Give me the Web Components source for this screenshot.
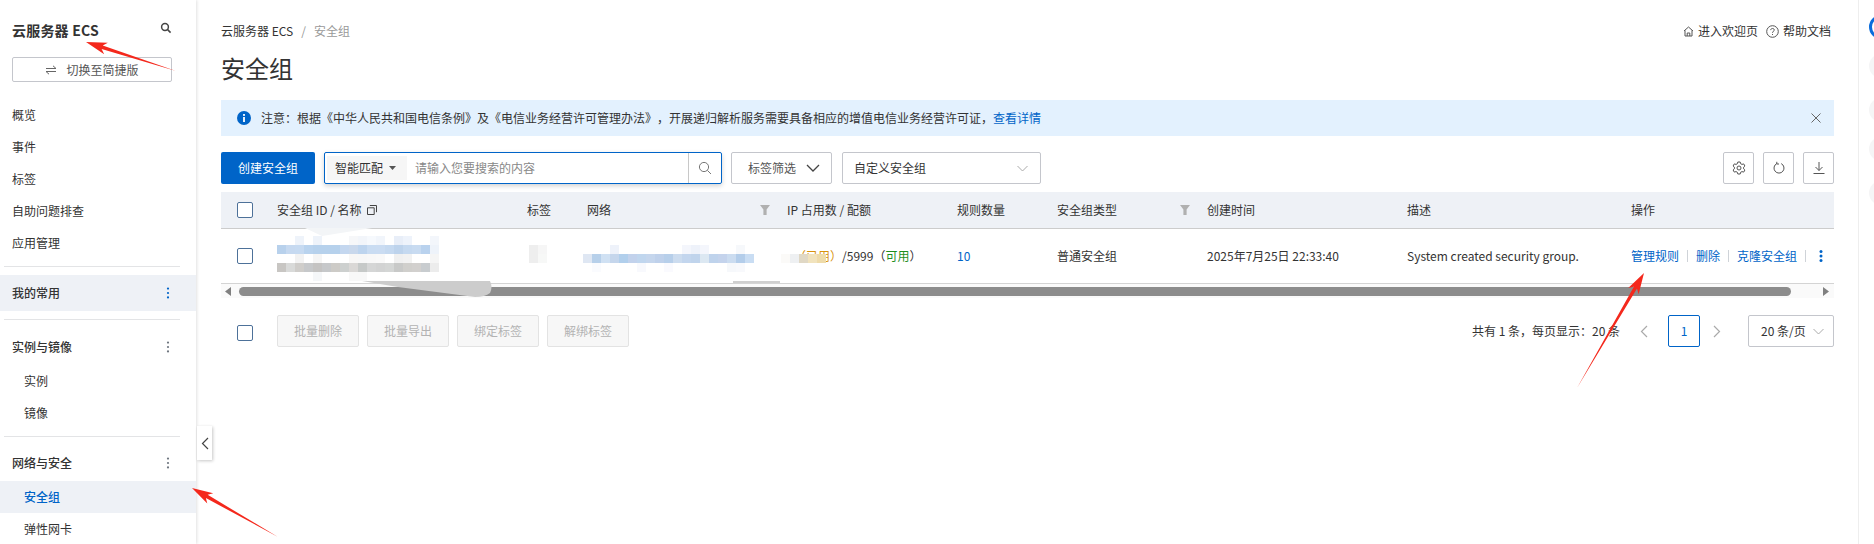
<!DOCTYPE html>
<html lang="zh-CN">
<head>
<meta charset="utf-8">
<title>安全组 - 云服务器 ECS</title>
<style>
  html, body { margin: 0; height: 544px; overflow: hidden; background: #fff; }
  body {
    position: relative;
    font: 12px/20px "Noto Sans CJK SC", "Noto Sans", sans-serif;
    text-spacing-trim: space-all;
    color: #333;
    display: grid;
    grid-template-columns: 196px 1fr 16px;
  }
</style>
</head>
<body>
  <side-bar>
    <nav-title big icon="search">云服务器 ECS</nav-title>
    <switch-button>切换至简捷版</switch-button>
    <nav-item style="margin-top:17px">概览</nav-item>
    <nav-item>事件</nav-item>
    <nav-item>标签</nav-item>
    <nav-item>自助问题排查</nav-item>
    <nav-item>应用管理</nav-item>
    <nav-rule style="margin:7px 16px 8px 4px"></nav-rule>
    <nav-title shaded icon="kebab-blue">我的常用</nav-title>
    <nav-rule style="margin:8px 16px 9px 4px"></nav-rule>
    <nav-title icon="kebab">实例与镜像</nav-title>
    <nav-item sub>实例</nav-item>
    <nav-item sub>镜像</nav-item>
    <nav-rule style="margin:7px 16px 8px 4px"></nav-rule>
    <nav-title icon="kebab">网络与安全</nav-title>
    <nav-item sub active>安全组</nav-item>
    <nav-item sub>弹性网卡</nav-item>
  </side-bar>

  <main-area>
    <page-head></page-head>
    <notice-bar></notice-bar>
    <tool-bar></tool-bar>
    <data-table></data-table>
    <pager-bar></pager-bar>
  </main-area>

  <right-strip></right-strip>
  <collapse-tab></collapse-tab>
  <mark-up></mark-up>

<script>
  const ICONS = {
    search: '<svg width="12" height="12" viewBox="0 0 12 12" fill="none" stroke="currentColor" stroke-width="1.5"><circle cx="5" cy="5" r="3.4"/><path d="M7.6 7.6 10.6 10.6"/></svg>',
    searchThin: '<svg width="14" height="14" viewBox="0 0 14 14" fill="none" stroke="currentColor"><circle cx="6" cy="6" r="4.6"/><path d="M9.4 9.4 13 13"/></svg>',
    kebab: '<svg width="4" height="12" viewBox="0 0 4 12" fill="currentColor"><circle cx="2" cy="1.6" r="1.1"/><circle cx="2" cy="6" r="1.1"/><circle cx="2" cy="10.4" r="1.1"/></svg>',
    kebabBig: '<svg width="4" height="12" viewBox="0 0 4 12" fill="currentColor"><circle cx="2" cy="1.6" r="1.5"/><circle cx="2" cy="6" r="1.5"/><circle cx="2" cy="10.4" r="1.5"/></svg>',
    swap: '<svg width="12" height="10" viewBox="0 0 12 10" fill="none" stroke="currentColor"><path d="M1 3.5H11L8 .8M11 6.5H1L4 9.2"/></svg>',
    down: '<svg width="14" height="8" viewBox="0 0 14 8" fill="none" stroke="currentColor" stroke-width="1.3"><path d="M1 1 7 7 13 1"/></svg>',
    downSmall: '<svg width="11" height="7" viewBox="0 0 11 7" fill="none" stroke="currentColor"><path d="M.5 1 5.5 6 10.5 1"/></svg>',
    left: '<svg width="8" height="13" viewBox="0 0 8 13" fill="none" stroke="currentColor" stroke-width="1.2"><path d="M7 1 1.5 6.5 7 12"/></svg>',
    right: '<svg width="8" height="13" viewBox="0 0 8 13" fill="none" stroke="currentColor" stroke-width="1.2"><path d="M1 1 6.5 6.5 1 12"/></svg>',
    home: '<svg width="11" height="11" viewBox="0 0 11 11" fill="none" stroke="currentColor"><path d="M1 5 5.5 1 10 5M2 4.4V10H9V4.4M4.2 10V7H6.8V10"/></svg>',
    help: '<svg width="13" height="13" viewBox="0 0 13 13" fill="none" stroke="currentColor"><circle cx="6.5" cy="6.5" r="5.8"/><path d="M4.7 5.1C4.7 2.9 8.3 3 8.3 5 8.3 6.2 6.5 6.3 6.5 7.8M6.5 9V10"/></svg>',
    info: '<svg width="14" height="14" viewBox="0 0 14 14"><circle cx="7" cy="7" r="7" fill="#0064c8"/><rect x="6.1" y="6" width="1.8" height="5" fill="#fff"/><rect x="6.1" y="3" width="1.8" height="1.9" fill="#fff"/></svg>',
    close: '<svg width="10" height="10" viewBox="0 0 10 10" fill="none" stroke="currentColor"><path d="M.5.5 9.5 9.5M9.5.5.5 9.5"/></svg>',
    gear: '<svg width="14" height="14" viewBox="0 0 14 14" fill="none" stroke="currentColor"><path d="M5.8 1H8.2L8.6 2.7 10 3.4 11.7 2.9 12.9 5 11.6 6.2V7.8L12.9 9 11.7 11.1 10 10.6 8.6 11.3 8.2 13H5.8L5.4 11.3 4 10.6 2.3 11.1 1.1 9 2.4 7.8V6.2L1.1 5 2.3 2.9 4 3.4 5.4 2.7Z"/><circle cx="7" cy="7" r="2"/></svg>',
    refresh: '<svg width="14" height="14" viewBox="0 0 14 14" fill="none" stroke="currentColor"><path d="M9.2 2.6A5 5 0 1 1 4.8 2.6"/><path d="M4.8 .8V3H7"/></svg>',
    download: '<svg width="14" height="14" viewBox="0 0 14 14" fill="none" stroke="currentColor"><path d="M7 1V9.5M3.5 6 7 9.5 10.5 6M1.5 12.5H12.5"/></svg>',
    funnel: '<svg width="10" height="10" viewBox="0 0 10 10" fill="#b0b0b0"><path d="M0 0H10L6.6 4.4V10H3.4V4.4Z"/></svg>',
    copy: '<svg width="10" height="10" viewBox="0 0 10 10" fill="none" stroke="#444"><path d="M.5 2.8H7.2V9.5H.5ZM2.8 .5H9.5V7.2"/></svg>',
    caret: '<svg width="7" height="4" viewBox="0 0 7 4" fill="#555"><path d="M0 0H7L3.5 4Z"/></svg>'
  };

  // small helper, every element below is only css + markup in an open shadow root
  function component(name, css, html, setup) {
    const template = document.createElement("template");
    template.innerHTML = `<style>${css}</style>${html}`;
    customElements.define(name, class extends HTMLElement {
      constructor() {
        super();
        this.attachShadow({ mode: "open" });
        this.shadowRoot.appendChild(template.content.cloneNode(true));
      }
      connectedCallback() {
        if (setup) setup(this, this.shadowRoot);
      }
    });
  }

  component("side-bar", `
    :host { display: block; height: 544px; overflow: hidden; background: #fff; box-shadow: 1px 0 3px rgba(0,0,0,.12); position: relative; }
  `, `<slot></slot>`);

  component("nav-title", `
    :host { display: flex; align-items: center; justify-content: space-between; height: 36px; padding: 0 26px 0 12px; font-weight: 500; color: #333; }
    :host([big]) { height: 54px; padding-top: 3px; font-size: 14px; padding-right: 24px; font-weight: 700; letter-spacing: .2px; }
    :host([shaded]) { background: #eef1f6; }
    i { display: flex; color: #6f7680; font-style: normal; }
    :host([big]) i { color: #444; margin-top: -4px; }
    :host([shaded]) i { color: #0064c8; }
  `, `<span><slot></slot></span><i id="ic"></i>`, (el, root) => {
    const n = el.getAttribute("icon");
    root.getElementById("ic").innerHTML = n === "search" ? ICONS.search : ICONS.kebab;
  });

  component("switch-button", `
    :host { display: flex; align-items: center; justify-content: center; gap: 9px; box-sizing: border-box; width: 160px; height: 25px; margin-left: 12px; border: 1px solid #c4c6cc; border-radius: 2px; color: #555; background: #fff; }
    i { display: flex; color: #666; }
  `, `<i>${ICONS.swap}</i><span><slot></slot></span>`);

  component("nav-item", `
    :host { display: flex; align-items: center; height: 32px; padding-left: 12px; color: #333; }
    :host([sub]) { padding-left: 24px; }
    :host([active]) { background: #eef1f6; color: #0064c8; font-weight: 500; }
  `, `<slot></slot>`);

  component("nav-rule", `:host { display: block; height: 1px; background: #e3e4e6; }`, ``);

  component("main-area", `
    :host { display: block; padding: 21px 24px 0 25px; min-width: 0; }
  `, `<slot></slot>`);

  component("page-head", `
    :host { display: block; }
    .top { display: flex; justify-content: space-between; height: 20px; padding-right: 3px; }
    .crumb b { font-weight: 400; color: #999; }
    .crumb u { text-decoration: none; color: #999; margin: 0 8px; }
    .links { display: flex; align-items: center; }
    .links span { display: flex; align-items: center; gap: 4px; margin-left: 8px; }
    .links svg { color: #555; }
    h1 { margin: 9px 0 0; font-size: 24px; line-height: 36px; font-weight: 400; color: #333; }
  `, `
    <div class="top">
      <div class="crumb">云服务器 ECS<u>/</u><b>安全组</b></div>
      <div class="links"><span>${ICONS.home}进入欢迎页</span><span>${ICONS.help}帮助文档</span></div>
    </div>
    <h1>安全组</h1>
  `);

  component("notice-bar", `
    :host { display: flex; align-items: center; height: 36px; margin-top: 14px; padding: 0 13px 0 16px; background: #e3f1fe; }
    span { flex: 1; margin-left: 10px; }
    a { color: #0064c8; }
    i { display: flex; color: #666; }
  `, `${ICONS.info}<span>注意：根据《中华人民共和国电信条例》及《电信业务经营许可管理办法》，开展递归解析服务需要具备相应的增值电信业务经营许可证，<a>查看详情</a></span><i>${ICONS.close}</i>`);

  component("tool-bar", `
    :host { display: flex; height: 32px; margin-top: 16px; }
    .create { width: 94px; background: #0064c8; color: #fff; border-radius: 2px; display: flex; align-items: center; justify-content: center; }
    .search { box-sizing: border-box; width: 398px; margin-left: 9px; display: flex; align-items: center; border: 1px solid #0064c8; border-radius: 2px; box-shadow: 0 2px 5px rgba(0,0,0,.18); }
    .match { margin-left: 2px; width: 80px; height: 24px; background: #f6f6f6; display: flex; align-items: center; padding-left: 8px; box-sizing: border-box; gap: 6px; }
    .hint { flex: 1; padding-left: 8px; color: #888; }
    .go { width: 32px; height: 30px; border-left: 1px solid #c8c8c8; display: flex; align-items: center; justify-content: center; color: #777; }
    .box { box-sizing: border-box; display: flex; align-items: center; justify-content: space-between; height: 32px; border: 1px solid #c4c6cc; border-radius: 2px; margin-left: 9px; }
    .tag { width: 101px; padding: 0 11px 0 16px; color: #555; }
    .tag svg { color: #444; }
    .kind { width: 199px; margin-left: 10px; padding: 0 12px 0 11px; }
    .kind svg { color: #aaa; }
    .end { flex: 1; display: flex; justify-content: flex-end; gap: 9px; }
    .tool { box-sizing: border-box; width: 31px; height: 32px; border: 1px solid #c4c6cc; border-radius: 2px; display: flex; align-items: center; justify-content: center; color: #555; }
  `, `
    <div class="create">创建安全组</div>
    <div class="search">
      <div class="match">智能匹配${ICONS.caret}</div>
      <div class="hint">请输入您要搜索的内容</div>
      <div class="go">${ICONS.searchThin}</div>
    </div>
    <div class="box tag">标签筛选${ICONS.down}</div>
    <div class="box kind">自定义安全组${ICONS.downSmall}</div>
    <div class="end">
      <div class="tool">${ICONS.gear}</div>
      <div class="tool">${ICONS.refresh}</div>
      <div class="tool">${ICONS.download}</div>
    </div>
  `);

  component("check-box", `
    :host { display: block; box-sizing: border-box; width: 16px; height: 16px; border: 1px solid #4d7199; border-radius: 2px; background: #fff; }
  `, ``);

  // blurred-out values of the screenshot: rows of 9px cells, "." is an empty cell
  component("mosaic-blur", `
    :host { display: grid; grid-auto-rows: 9px; grid-auto-columns: 9px; }
    b { display: block; }
  `, ``, (el, root) => {
    el.getAttribute("cells").trim().split(/\s*\|\s*/).forEach((row, r) => {
      row.split(/\s+/).forEach((c, i) => {
        if (c === ".") return;
        const cell = document.createElement("b");
        cell.style.cssText = `grid-row:${r + 1};grid-column:${i + 1};background:#${c}`;
        root.appendChild(cell);
      });
    });
  });

  const columns = "56px 250px 60px 200px 170px 100px 150px 200px 224px 203px";

  component("table-row", `
    :host { display: grid; grid-template-columns: ${columns}; align-items: center; height: 36px; background: #eef1f6; border-bottom: 1px solid #ccc; }
    :host([body]) { height: 54px; background: #fff; border-bottom-color: #d4d4d4; }
  `, `<slot></slot>`);

  component("scroll-track", `
    :host { display: flex; align-items: center; height: 14px; padding: 0 5px 0 4px; background: #fafafa; }
    .thumb { width: 1552px; height: 9px; margin: 0 32px 0 8px; border-radius: 5px; background: #8c8c8c; }
    svg { flex: none; fill: #808080; }
  `, `<svg width="6" height="9" viewBox="0 0 6 9"><path d="M6 0V9L0 4.5Z"/></svg><div class="thumb"></div><svg width="6" height="9" viewBox="0 0 6 9"><path d="M0 0V9L6 4.5Z"/></svg>`);

  component("data-table", `
    :host { display: block; margin-top: 8px; }
    check-box { margin-left: 16px; }
    .f { display: flex; align-items: center; justify-content: space-between; padding-right: 17px; }
    .id { display: flex; align-items: center; gap: 5px; }
    .link { color: #0064c8; }
    .ops { display: flex; align-items: center; color: #0064c8; }
    .ops u { width: 1px; height: 12px; background: #cfd3d8; margin: 0 8px; }
    .ops svg { margin-left: 5px; }
    .ip { position: relative; padding-left: 7px; }
    .ip mosaic-blur { position: absolute; left: -6px; top: 8px; }
    .used { color: #d9930d; }
    .free { color: #1e8e1e; }
    .m0 { align-self: start; margin-top: 7px; }
    .m1 { align-self: start; margin-top: 16px; }
  `, `
    <table-row>
      <check-box></check-box>
      <div class="id">安全组 ID / 名称 ${ICONS.copy}</div>
      <div>标签</div>
      <div class="f">网络${ICONS.funnel}</div>
      <div>IP 占用数 / 配额</div>
      <div>规则数量</div>
      <div class="f">安全组类型${ICONS.funnel}</div>
      <div>创建时间</div>
      <div>描述</div>
      <div>操作</div>
    </table-row>
    <table-row body>
      <check-box></check-box>
      <mosaic-blur class="m0" cells="
        . . eef3fa . eef3fa . . . f6f7f9 f2f5fa f6f9fd f1f5fb . e8eef8 eef3fb . . f3f6fb |
        b8d1ec c6d9f0 c6daf1 b9d3ee b6d1ec b6d1ec b6d1ec c4d7ef c9d8ec bdd4ee c9dcf2 cadcf2 c5d9f0 bdd3ec c5d9f0 c8dbf1 b9d2ee eef3fa |
        . . f2f2f2 . f5f5f5 . . . f8f7f6 f7f7f7 f8f8f8 f9f9f9 . f0f0f0 f2f2f2 . . f5f5f5 |
        c8c6c3 d9dad9 cfcdca c6c8ca c4c3c2 c6c8ca cdcbc7 cdd0cf dad8d6 c6c9c8 d5d6d6 d2d3d3 d4d6d5 c8c9c8 d0cfcc d2d0ce c8cccf ececec |
        . . . . f5f7f9 . . . f8f8f8 f8f8f8
      "></mosaic-blur>
      <mosaic-blur class="m1" style="margin-left:2px" cells="eeeeee f6f6f6 | eeeeee f7f8f7"></mosaic-blur>
      <mosaic-blur class="m1" style="margin-left:-4px" cells="
        . . . eef2fa . . . . . . . f4f6fc eef2fa f4f6fc . . . f6f8fb |
        dfe7f3 b7d0ea d0e1f3 c5d6ec b1cfec c2d2ec c0d6ee c5d6ed bfd1eb b7cfea ccdcef c3d6ee c0d4ec dce8f2 bfd3ec c4d3ec cbdcf0 b3cdea c9ddf3 |
        . fafbfe . . . . f8f9fd . . fafafe . . . . . . f6f8fb f8f9fc
      "></mosaic-blur>
      <div class="ip"><span class="used">（已用）</span>/5999<span class="free"><span style="color:#333">（</span>可用<span style="color:#333">）</span></span>
        <mosaic-blur cells="fbfaf8 eef0f2 e0d8c5 f1e3bd eedbaa"></mosaic-blur>
      </div>
      <div class="link">10</div>
      <div>普通安全组</div>
      <div>2025年7月25日 22:33:40</div>
      <div>System created security group.</div>
      <div class="ops"><span>管理规则</span><u></u><span>删除</span><u></u><span>克隆安全组</span><u></u>${ICONS.kebabBig}</div>
    </table-row>
    <scroll-track></scroll-track>
  `);

  component("pager-bar", `
    :host { display: flex; align-items: center; height: 32px; margin-top: 17px; }
    check-box { margin: 4px 24px 0 16px; }
    .off { box-sizing: border-box; width: 82px; height: 32px; margin-right: 8px; display: flex; align-items: center; justify-content: center; border: 1px solid #e3e3e3; border-radius: 2px; background: #f7f7f7; color: #b3b3b3; }
    .count { margin-left: auto; margin-right: 20px; }
    .arrow { display: flex; color: #aaa; }
    .page { box-sizing: border-box; width: 32px; height: 32px; margin: 0 13px 0 20px; border: 1px solid #0064c8; border-radius: 2px; display: flex; align-items: center; justify-content: center; color: #0064c8; }
    .size { box-sizing: border-box; width: 86px; height: 32px; margin-left: 27px; padding: 0 9px 0 12px; border: 1px solid #c4c6cc; border-radius: 2px; display: flex; align-items: center; justify-content: space-between; }
    .size svg { color: #aaa; }
  `, `
    <check-box></check-box>
    <div class="off">批量删除</div><div class="off">批量导出</div><div class="off">绑定标签</div><div class="off">解绑标签</div>
    <div class="count">共有 1 条，每页显示：20 条</div>
    <div class="arrow">${ICONS.left}</div>
    <div class="page">1</div>
    <div class="arrow">${ICONS.right}</div>
    <div class="size">20 条/页${ICONS.downSmall}</div>
  `);

  component("right-strip", `
    :host { display: block; box-sizing: border-box; height: 544px; overflow: hidden; border-left: 1px solid #eee; padding-left: 10px; }
    b { display: block; box-sizing: border-box; width: 24px; height: 24px; border-radius: 50%; background: #f5f5f6; }
    .on { margin-top: 15px; background: #fff; border: 3px solid #0a6cdc; }
  `, `<b class="on"></b><b style="margin-top:15px"></b><b style="margin-top:20px"></b><b style="margin-top:15px"></b><b style="margin-top:20px"></b>`);

  component("collapse-tab", `
    :host { position: absolute; left: 197px; top: 426px; width: 15px; height: 34px; display: flex; align-items: center; justify-content: center; background: #fff; box-shadow: 1px 1px 3px rgba(0,0,0,.22); color: #444; }
  `, ICONS.left);

  // red annotation arrows and retouching smudges drawn over the screenshot
  component("mark-up", `
    :host { position: absolute; left: 0; top: 0; width: 1874px; height: 544px; pointer-events: none; }
    svg { display: block; }
  `, `<svg id="s" width="1874" height="544" viewBox="0 0 1874 544">
      <path d="M305 228H372L322 236Z" fill="#f3f5f7"/>
      <path d="M362 281H490Q493 287 490 293Q485 297 475 297L398 287Z" fill="#cccccc"/>
      <rect x="733" y="281" width="47" height="2" fill="#cfcfcf"/>
    </svg>`, (el, root) => {
    const svg = root.getElementById("s");
    [[176, 71, 86, 42], [278, 537, 192, 488], [1577, 388, 1644, 273]].forEach(([x0, y0, x1, y1]) => {
      const len = Math.hypot(x1 - x0, y1 - y0), ux = (x1 - x0) / len, uy = (y1 - y0) / len;
      const at = (back, side) => `${x1 - ux * back - uy * side},${y1 - uy * back + ux * side}`;
      const arrow = document.createElementNS("http://www.w3.org/2000/svg", "polygon");
      arrow.setAttribute("fill", "#f4281c");
      arrow.setAttribute("points", [`${x0},${y0}`, at(17, 1.8), at(21, 6), `${x1},${y1}`, at(21, -6), at(17, -1.8)].join(" "));
      svg.appendChild(arrow);
    });
  });
</script>
</body>
</html>
